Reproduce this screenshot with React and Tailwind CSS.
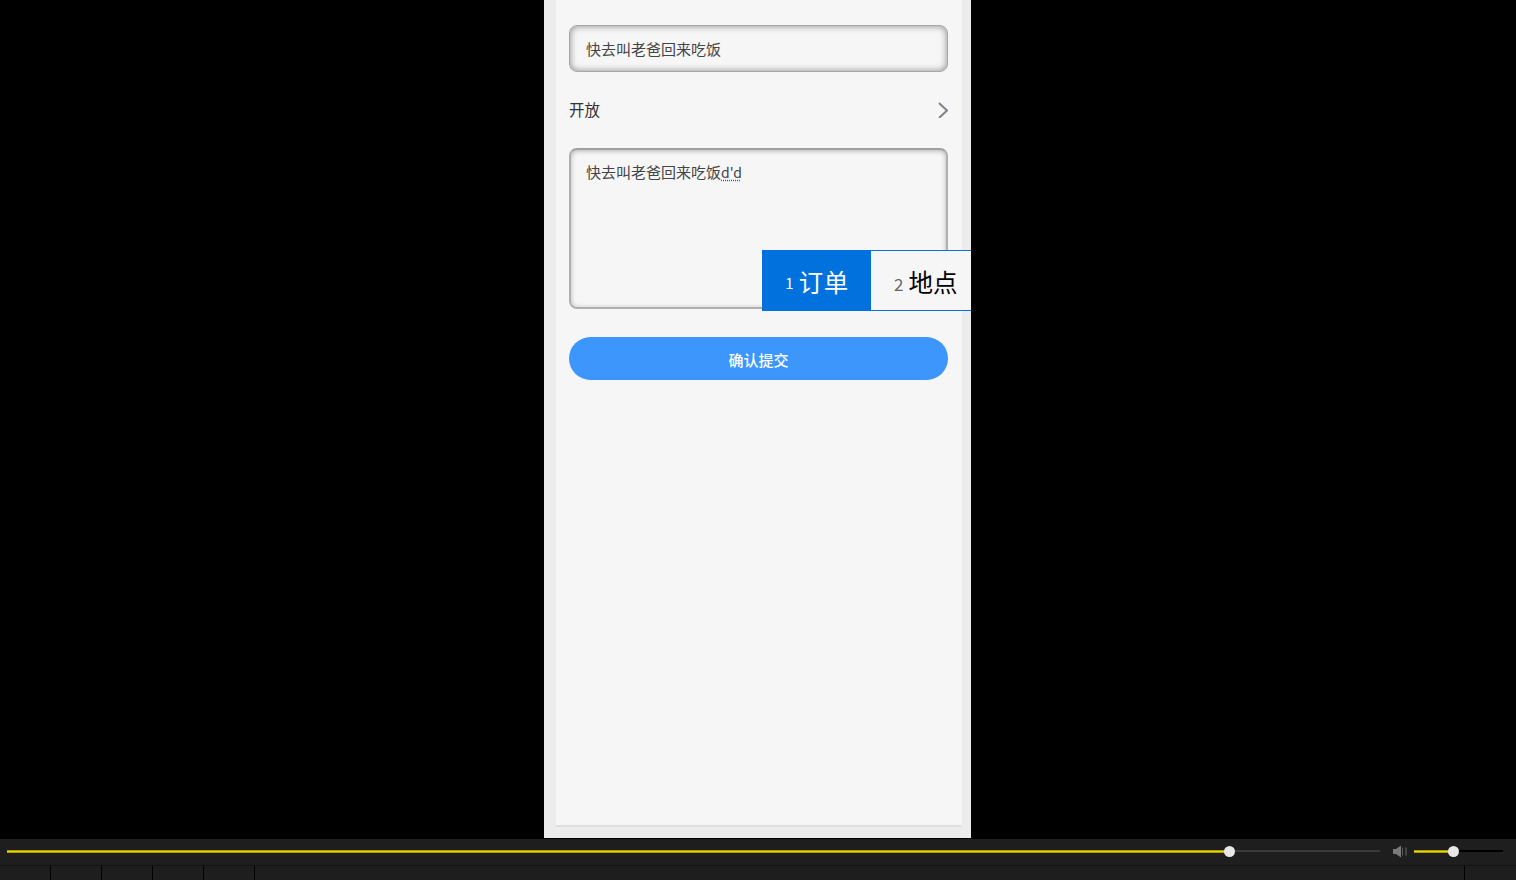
import React from "react";

function Chevron() {
  return (
    <svg width="10" height="16" viewBox="0 0 10 16" fill="none" stroke="#7d8388" strokeWidth="2">
      <path d="M1 1 L9 8.5 L1 16" />
    </svg>
  );
}

function Speaker() {
  return (
    <svg width="15" height="13" viewBox="0 0 15 13" fill="#7a7a7a">
      <path d="M0 4 H3 L8 0.5 V12.5 L3 9 H0 Z" />
      <rect x="9" y="2.5" width="1" height="8" fill="#5a5a5a" />
      <rect x="12.5" y="2.5" width="1" height="8" fill="#6a6a6a" />
    </svg>
  );
}

function Track({ filled, rest, restColor }) {
  return (
    <div className="flex items-center">
      <div className="h-[3px] bg-[#efd800] border-y border-[#a89a00] box-border" style={{ width: filled }} />
      <div className="w-[11px] h-[11px] -mx-[5px] rounded-full bg-[#e8e8e8] relative z-10 shrink-0" />
      <div className={`h-[2px] ${restColor}`} style={{ width: rest }} />
    </div>
  );
}

export default function App() {
  const tabSeparators = [50, 50, 50, 50, 50];
  return (
    <div className="h-[880px] w-[1516px] overflow-hidden bg-black flex flex-col font-['Noto_Sans_CJK_SC','Liberation_Sans',sans-serif]">
      <div className="h-[838px] shrink-0 ml-[544px] w-[427px] bg-[#ececec] pl-[12px] pr-[9px] relative">
        <div className="h-[827px] bg-[#f6f6f6] border-b-2 border-[#e0e0e0] pl-[13px] pr-[14px] pt-[25px]">
          <div className="h-[47px] rounded-[8px] border border-[#a8a8a8] shadow-[inset_0_0_7px_rgba(0,0,0,0.45)] flex items-center pl-[16px] pb-[1px] text-[15px] leading-none text-[#444]">
            快去叫老爸回来吃饭
          </div>
          <div className="h-[76px] flex items-center justify-between text-[15px] text-[#333]">
            <span className="-mt-[1px] text-[15.5px]">开放</span>
            <Chevron />
          </div>
          <div className="h-[161px] rounded-[8px] border-2 border-[#b0b0b0] border-t-[#a0a0a0] shadow-[inset_0_1px_5px_rgba(0,0,0,0.28)] pl-[15px] pt-[11px] text-[15px] leading-[22px] text-[#444]">
            快去叫老爸回来吃饭
            <span className="underline decoration-dotted decoration-[#555] underline-offset-2 text-[14px]">d'd</span>
          </div>
          <div className="mt-[28px] h-[43px] rounded-full bg-[#3c96fc] flex items-center justify-center pt-[3px] text-white text-[15px] font-medium">
            确认提交
          </div>
        </div>
        <div className="absolute left-[218px] top-[250px] w-[209px] h-[61px] flex bg-[#f6f6f6] border-y border-[#0a6fd8]">
          <div className="w-[109px] -my-px bg-[#0071dd] flex items-center justify-center gap-[5px] pt-[3px] text-white">
            <span className="text-[15px] mt-[3px] ml-[1px]">1</span>
            <span className="text-[24.5px] tracking-[0.5px]">订单</span>
          </div>
          <div className="flex-1 pl-[23px] pt-[3px] flex items-center gap-[5px] text-black">
            <span className="text-[17px] mt-[3px] text-[#666]">2</span>
            <span className="text-[24.5px]">地点</span>
          </div>
        </div>
      </div>
      <div className="h-[1px] shrink-0 bg-black" />
      <div className="flex-1 bg-[#1e1e1e] flex flex-col">
        <div className="h-[27px] shrink-0 flex items-center pl-[7px] pb-[2px] box-border border-b border-[#131313]">
          <Track filled={1222} rest={150} restColor="bg-[#3a3a3a]" />
          <div className="ml-[13px] mr-[6px]"><Speaker /></div>
          <Track filled={39} rest={49} restColor="bg-black" />
        </div>
        <div className="flex-1 flex">
          {tabSeparators.map((w, i) => (
            <div key={i} className="w-[51px] border-r border-black" />
          ))}
          <div className="w-[1210px] border-r border-black" />
        </div>
      </div>
    </div>
  );
}
